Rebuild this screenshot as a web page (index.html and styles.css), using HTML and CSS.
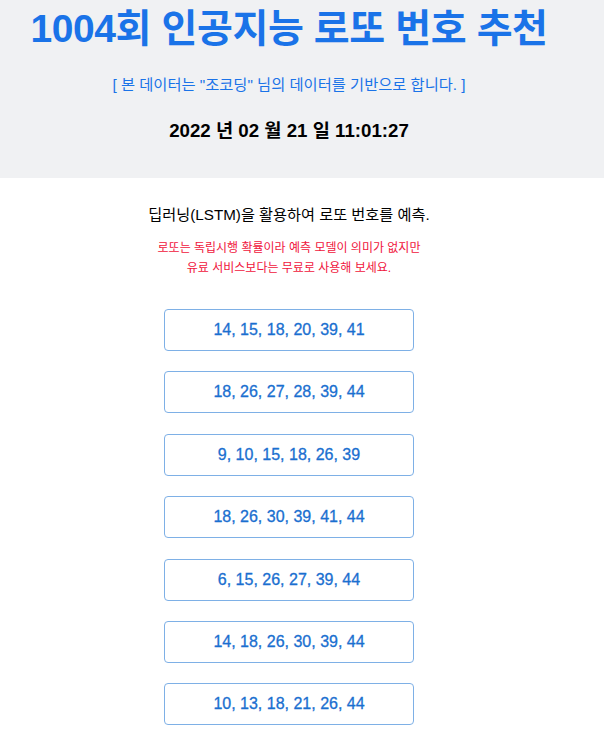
FILE: index.html
```html
<!DOCTYPE html>
<html lang="ko">
<head>
    <meta charset="UTF-8">
    <meta name="viewport" content="width=device-width, initial-scale=1.0">
    <title>로또 번호 추천</title>
    <link rel="stylesheet" href="styles.css">
</head>
<body>
    <header class="top">
        <div class="inner">
            <h1 class="title">1004회 인공지능 로또 번호 추천</h1>
            <p class="source">[ 본 데이터는 "조코딩" 님의 데이터를 기반으로 합니다. ]</p>
            <p class="clock">2022 년 02 월 21 일 11:01:27</p>
        </div>
    </header>

    <main class="inner content">
        <p class="desc">딥러닝(LSTM)을 활용하여 로또 번호를 예측.</p>
        <p class="warn">로또는 독립시행 확률이라 예측 모델이 의미가 없지만<br>유료 서비스보다는 무료로 사용해 보세요.</p>

        <div class="picks">
            <div class="pick">14, 15, 18, 20, 39, 41</div>
            <div class="pick">18, 26, 27, 28, 39, 44</div>
            <div class="pick">9, 10, 15, 18, 26, 39</div>
            <div class="pick">18, 26, 30, 39, 41, 44</div>
            <div class="pick">6, 15, 26, 27, 39, 44</div>
            <div class="pick">14, 18, 26, 30, 39, 44</div>
            <div class="pick">10, 13, 18, 21, 26, 44</div>
        </div>
    </main>
</body>
</html>
```

FILE: styles.css
```css
body {
    font-family: 'Liberation Sans', 'Noto Sans CJK KR', sans-serif;
    margin: 0;
    padding: 0;
    background-color: #fff;
    color: #000;
}
.inner {
    width: 578px;
    text-align: center;
}
.top {
    background: #f0f1f3;
    height: 178px;
    overflow: hidden;
}
.title {
    margin: 0;
    padding-top: 5px;
    font-size: 39px;
    font-weight: bold;
    line-height: 48px;
    color: #1a73e8;
    letter-spacing: -0.4px;
}
.source {
    margin: 22px 0 0;
    font-size: 15.3px;
    line-height: 20px;
    color: #1a73e8;
}
.clock {
    margin: 23px 0 0;
    font-size: 18.7px;
    font-weight: bold;
    line-height: 26px;
}
.content {
    padding-top: 26px;
}
.desc {
    margin: 0;
    font-size: 15.2px;
    line-height: 22px;
}
.warn {
    margin: 12px 0 0;
    font-size: 12px;
    line-height: 20px;
    color: #f0143c;
}
.picks {
    display: flex;
    flex-direction: column;
    align-items: center;
    gap: 20.4px;
    margin-top: 31px;
}
.pick {
    width: 248px;
    height: 40px;
    line-height: 40px;
    border: 1px solid #7eb0e6;
    border-radius: 4px;
    color: #1a6fd0;
    font-size: 16px;
    -webkit-text-stroke: 0.3px #1a6fd0;
}
```
